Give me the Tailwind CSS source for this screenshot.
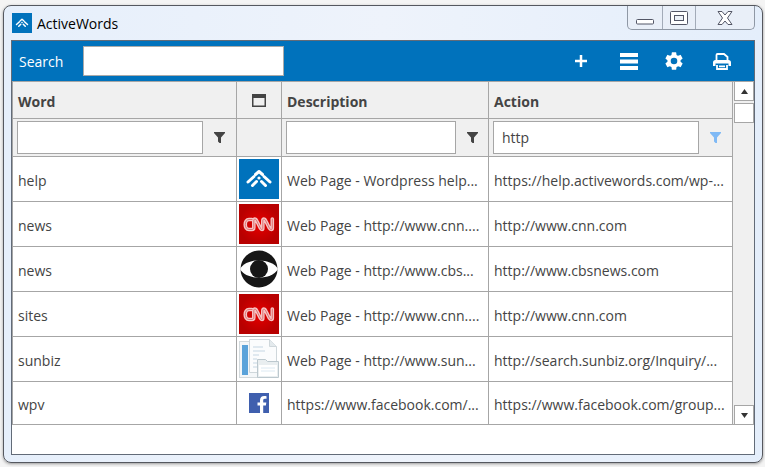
<!DOCTYPE html>
<html lang="en">

<head>
    <meta charset="UTF-8">
    <meta name="viewport" content="width=device-width, initial-scale=1.0">
    <title>ActiveWords</title>
    <script src="https://cdn.jsdelivr.net/npm/@tailwindcss/browser@4"></script>
</head>

<body class="bg-[#f4f4f4] pt-[5px] pr-[2px] pb-1 pl-[3px] font-['Open_Sans','Noto_Sans',sans-serif] text-sm text-[#444]">

    <!-- Shared icons -->
    <svg class="absolute size-0">
        <symbol id="logo" viewBox="0 0 40 40">
            <rect width="40" height="40" fill="#0072bc" />
            <path d="M16.500 15.500l3.500-3 3.500 3" fill="none" stroke="#fff" stroke-width="3" stroke-linecap="round" stroke-linejoin="round" />
            <path d="M15 17.500l-6 5.500M25 17.500l6 5.500M17.500 22.500l-4 4M22.500 22.500l4 4" stroke="#fff" stroke-width="3" stroke-linecap="round" />
            <circle cx="20" cy="19" r="1.600" fill="#fff" />
        </symbol>
        <symbol id="funnel" viewBox="0 0 11 12">
            <path d="M0 0h11v1L7 5.500V11H5.500L4 9.500v-4L0 1z" fill="currentColor" />
        </symbol>
        <radialGradient id="red">
            <stop offset="0" stop-color="#e80000" />
            <stop offset="1" stop-color="#b80000" />
        </radialGradient>
        <symbol id="cnn" viewBox="0 0 40 40">
            <rect width="40" height="40" fill="url(#red)" />
            <g fill="none" stroke-linejoin="round" stroke-linecap="round">
                <path d="M13 15.500H10c-5 0-5 10 0 10h3c1.200 0 1.800-.8 1.800-2v-6.500c0-2.500 2-2.500 3 0l3.500 7c1 2 2.500 2 2.500 0v-7c0-2.500 2-2.500 3 0l3.500 7c1 2 3 2 3 0v-9" stroke="#f6c4c4" stroke-width="3.600" />
                <path d="M13 15.500H10c-5 0-5 10 0 10h3c1.200 0 1.800-.8 1.800-2v-6.500c0-2.500 2-2.500 3 0l3.500 7c1 2 2.500 2 2.500 0v-7c0-2.500 2-2.500 3 0l3.500 7c1 2 3 2 3 0v-9" stroke="#d86060" stroke-width=".8" />
            </g>
        </symbol>
    </svg>

    <div class="rounded-lg border border-[#55585f] bg-linear-to-r from-[#e6effb] via-[#eef3fb] to-[#e4eefb] px-[7px] pb-[7px] shadow-[0_1px_3px_#999]">

        <!-- Title bar -->
        <header class="flex h-[34px] items-start">
            <svg class="mt-[7px] ml-px size-5"><use href="#logo" /></svg>
            <h1 class="mt-2 ml-[5px] flex-1 text-sm leading-5 text-black">ActiveWords</h1>
            <div class="flex h-6 overflow-hidden rounded-b-[5px] border border-t-0 border-[#8f98a5] bg-[#e9eff8]">
                <button aria-label="Minimize" class="flex w-[35px] items-center justify-center border-r border-[#a3abb8]">
                    <svg class="mt-2 h-[6px] w-[18px]" viewBox="0 0 18 6"><rect x=".5" y=".5" width="17" height="4.500" rx="1" fill="#fff" stroke="#535666" /></svg>
                </button>
                <button aria-label="Maximize" class="flex w-[33px] items-center justify-center border-r border-[#a3abb8]">
                    <svg class="h-[14px] w-[18px]" viewBox="0 0 18 14">
                        <path d="M1.500.5h15a1 1 0 0 1 1 1v11a1 1 0 0 1-1 1h-15a1 1 0 0 1-1-1v-11a1 1 0 0 1 1-1z" fill="#fff" stroke="#535666" />
                        <rect x="4.500" y="4.500" width="9" height="5" fill="#edf2f9" stroke="#535666" />
                    </svg>
                </button>
                <button aria-label="Close" class="flex w-[58px] items-center justify-center">
                    <svg class="h-[14px] w-4" viewBox="0 0 16 14"><path d="M1 .5h4l3 3.500 3-3.500h4L10.500 7l4.500 6.500h-4L8 10l-3 3.500H1L5.500 7z" fill="#fff" stroke="#535666" stroke-linejoin="round" /></svg>
                </button>
            </div>
        </header>

        <main class="border border-[#626b78] bg-white">

            <!-- Toolbar -->
            <div class="flex h-10 items-center bg-[#0072bc] pr-[22px] pl-[7px] text-white">
                <label for="search" class="w-16 pt-[2px]">Search</label>
                <input id="search" type="text" class="h-[30px] w-[201px] border border-[#aaa] bg-white px-2 text-[#444] outline-none">
                <div class="ml-auto flex items-center gap-7">
                    <button aria-label="Add" class="flex size-5 items-center justify-center">
                        <svg class="size-3" viewBox="0 0 12 12"><path d="M6 0v12M0 6h12" stroke="#fff" stroke-width="2.500" /></svg>
                    </button>
                    <button aria-label="List" class="flex size-5 items-center justify-center">
                        <svg class="h-[17px] w-[18px]" viewBox="0 0 18 17"><path d="M0 2h18M0 8.500h18M0 15h18" stroke="#fff" stroke-width="4" /></svg>
                    </button>
                    <button aria-label="Settings" class="-ml-[3px] flex size-5 items-center justify-center">
                        <svg class="size-[22px] shrink-0" viewBox="0 0 24 24"><path fill="#fff" d="M19.140 12.940c.04-.3.060-.61.060-.94s-.02-.64-.07-.94l2.030-1.580a.49.49 0 0 0 .12-.61l-1.920-3.320a.49.49 0 0 0-.59-.22l-2.390.96a7 7 0 0 0-1.620-.94l-.36-2.540a.48.48 0 0 0-.48-.41h-3.840a.48.48 0 0 0-.47.410l-.36 2.540a7.400 7.400 0 0 0-1.620.94l-2.390-.96a.49.49 0 0 0-.59.220L2.740 8.870a.48.48 0 0 0 .12.610l2.030 1.580a6 6 0 0 0 0 1.880l-2.030 1.580a.49.49 0 0 0-.12.610l1.920 3.320c.12.220.37.290.59.220l2.390-.96c.5.380 1.030.7 1.620.940l.36 2.540c.05.240.24.410.48.410h3.840c.24 0 .44-.17.470-.41l.36-2.540a7.400 7.400 0 0 0 1.620-.94l2.390.960c.22.080.47 0 .59-.22l1.920-3.320a.48.48 0 0 0-.12-.61zM12 15.600a3.600 3.600 0 1 1 0-7.200 3.600 3.600 0 0 1 0 7.200z" /></svg>
                    </button>
                    <button aria-label="Print" class="flex size-5 items-center justify-center">
                        <svg class="h-[17px] w-[18px]" viewBox="0 0 18 17" fill="none" stroke="#fff" stroke-width="1.800">
                            <path d="M3.500 8V2a1 1 0 0 1 1-1H11l3.500 3v4" />
                            <path d="M2.500 7h13A2.500 2.500 0 0 1 18 9.500V13h-2.500v-2.500h-13V13H0V9.500A2.500 2.500 0 0 1 2.500 7z" fill="#fff" stroke="none" />
                            <path d="M4 12v4h10v-4M6 13.300h6" />
                        </svg>
                    </button>
                </div>
            </div>

            <!-- Word list -->
            <div class="flex border-y border-[#a6a6a6]">
                <table class="w-full min-w-0 flex-1 table-fixed border-separate border-spacing-0 border-l border-[#a6a6a6] [&_td]:overflow-hidden [&_td]:border-r [&_td]:border-b [&_td]:border-[#a6a6a6] [&_td]:whitespace-nowrap [&_th]:border-r [&_th]:border-b [&_th]:border-[#a6a6a6]">
                    <colgroup>
                        <col class="w-56">
                        <col class="w-[45px]">
                        <col class="w-[207px]">
                        <col>
                    </colgroup>
                    <thead class="bg-[#f0f0f0] text-left">
                        <tr class="h-[37px]">
                            <th class="px-[5px] pt-1">Word</th>
                            <th aria-label="Icon">
                                <svg class="mx-auto h-[13px] w-[14px]" viewBox="0 0 14 13"><path d="M0 0h14v13H0zM1.500 4v7.500h11V4z" fill="#444" fill-rule="evenodd" /></svg>
                            </th>
                            <th class="px-[5px] pt-1">Description</th>
                            <th class="px-[5px] pt-1">Action</th>
                        </tr>
                        <tr class="h-[38px]">
                            <td class="px-1">
                                <div class="flex items-center">
                                    <input type="text" aria-label="Filter word" class="h-[33px] w-0 flex-1 border border-[#a6a6a6] bg-white px-2 outline-none">
                                    <button aria-label="Word filter" class="flex w-[29px] justify-center pl-1"><svg class="h-3 w-[11px]"><use href="#funnel" /></svg></button>
                                </div>
                            </td>
                            <td></td>
                            <td class="px-1">
                                <div class="flex items-center">
                                    <input type="text" aria-label="Filter description" class="h-[33px] w-0 flex-1 border border-[#a6a6a6] bg-white px-2 outline-none">
                                    <button aria-label="Description filter" class="flex w-[28px] justify-center pl-1"><svg class="h-3 w-[11px]"><use href="#funnel" /></svg></button>
                                </div>
                            </td>
                            <td class="px-1">
                                <div class="flex items-center">
                                    <input type="text" aria-label="Filter action" value="http" class="h-[33px] w-0 flex-1 border border-[#a6a6a6] bg-white px-2 outline-none">
                                    <button aria-label="Action filter" class="flex w-[29px] justify-center pl-1 text-[#7fb9f5]"><svg class="h-3 w-[11px]"><use href="#funnel" /></svg></button>
                                </div>
                            </td>
                        </tr>
                    </thead>
                    <tbody class="[&_td]:px-[5px] [&_td]:pt-1 [&_td:nth-child(2)]:p-0">
                        <tr class="h-[45px]">
                            <td>help</td>
                            <td><svg class="mx-auto size-10"><use href="#logo" /></svg></td>
                            <td>Web Page - Wordpress help...</td>
                            <td>https://help.activewords.com/wp-...</td>
                        </tr>
                        <tr class="h-[45px]">
                            <td>news</td>
                            <td><svg class="mx-auto size-10"><use href="#cnn" /></svg></td>
                            <td>Web Page - http://www.cnn....</td>
                            <td>http://www.cnn.com</td>
                        </tr>
                        <tr class="h-[45px]">
                            <td>news</td>
                            <td>
                                <svg class="mx-auto size-10" viewBox="0 0 40 40">
                                    <circle cx="20" cy="20" r="18.500" fill="#161616" />
                                    <path d="M1 20C7 8.500 33 8.500 39 20 33 31.500 7 31.500 1 20z" fill="#fff" />
                                    <circle cx="20" cy="20" r="9" fill="#161616" />
                                </svg>
                            </td>
                            <td>Web Page - http://www.cbs...</td>
                            <td>http://www.cbsnews.com</td>
                        </tr>
                        <tr class="h-[45px]">
                            <td>sites</td>
                            <td><svg class="mx-auto size-10"><use href="#cnn" /></svg></td>
                            <td>Web Page - http://www.cnn....</td>
                            <td>http://www.cnn.com</td>
                        </tr>
                        <tr class="h-[45px]">
                            <td>sunbiz</td>
                            <td>
                                <svg class="mx-auto size-10" viewBox="0 0 40 40">
                                    <rect x=".5" y="2.500" width="25" height="36" fill="#f4f7f9" stroke="#d3dadd" />
                                    <rect x="3" y="6" width="6" height="30" fill="#5ba3da" />
                                    <path d="M10.500.5h20l7 7v26h-27z" fill="#fbfcfd" stroke="#cfd7db" />
                                    <path d="M30.500.5v7h7" fill="#e4eaed" stroke="#cfd7db" />
                                    <path d="M14 8h10M14 12h12M14 16h6M14 20h4M14 24h4M14 28h4" stroke="#e0e9f0" stroke-width="2" />
                                    <path d="M18.500 20.500h8l2 2h11v16h-21z" fill="#e9eef0" stroke="#bcc8ce" />
                                    <rect x="20" y="26" width="18" height="11" fill="#fff" />
                                    <path d="M22 29h14M22 32h14" stroke="#dce9f2" />
                                </svg>
                            </td>
                            <td>Web Page - http://www.sun...</td>
                            <td>http://search.sunbiz.org/Inquiry/...</td>
                        </tr>
                        <tr class="h-[42px] [&_td]:border-b-0">
                            <td>wpv</td>
                            <td>
                                <svg class="mx-auto size-5" viewBox="0 0 20 20">
                                    <rect width="20" height="20" fill="#3f5fae" />
                                    <path d="M11 20v-7.500H8.500v-3H11V7.300C11 4.500 12.600 3 15.200 3c1 0 1.900.1 2.300.200v2.600h-1.700c-1.300 0-1.600.7-1.600 1.700v2h3.100l-.4 3h-2.700V20z" fill="#fff" />
                                </svg>
                            </td>
                            <td>https://www.facebook.com/...</td>
                            <td>https://www.facebook.com/group...</td>
                        </tr>
                    </tbody>
                </table>

                <!-- Scroll bar -->
                <div class="flex w-[21px] flex-col bg-[#f0f0f0] pl-px">
                    <button aria-label="Scroll up" class="flex h-[19px] items-center justify-center border border-t-0 border-[#a6a6a6] bg-white">
                        <svg class="h-[5px] w-[7px]" viewBox="0 0 7 5"><path d="M0 5L3.500 0 7 5z" fill="#333" /></svg>
                    </button>
                    <div class="mt-[2px] h-5 border border-[#a6a6a6] bg-white"></div>
                    <button aria-label="Scroll down" class="mt-auto flex h-[19px] items-center justify-center border border-b-0 border-[#a6a6a6] bg-white">
                        <svg class="h-[5px] w-[7px]" viewBox="0 0 7 5"><path d="M0 0h7L3.500 5z" fill="#333" /></svg>
                    </button>
                </div>
            </div>

            <footer class="h-[29px]"></footer>
        </main>
    </div>

</body>

</html>
